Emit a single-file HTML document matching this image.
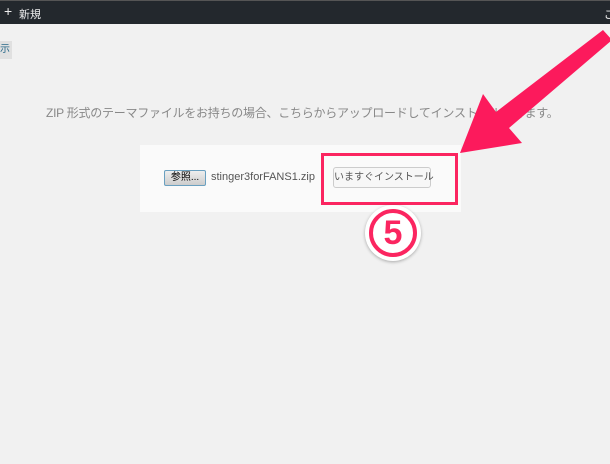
<!DOCTYPE html>
<html><head><meta charset="utf-8"><style>
body{margin:0;width:610px;height:464px;background:#f1f1f1;font-family:"Liberation Sans","Noto Sans CJK JP",sans-serif;position:relative;overflow:hidden}
.bar{position:absolute;left:0;top:0;width:610px;height:24px;background:#23282d;border-top:1px solid #555;box-sizing:border-box;color:#eee;font-size:11px}
.abs{position:absolute;white-space:nowrap}
</style></head><body>
<div class="bar"><span class="abs" style="left:4px;top:3px;font-size:14px;line-height:14px">+</span><span class="abs" style="left:19px;top:5px">新規</span><span class="abs" style="left:604px;top:5px">ご</span></div>
<div class="abs" style="left:0;top:41px;width:12px;height:18px;background:#e0e0e0;font-size:10px;color:#2a6a8a;line-height:18px;overflow:hidden">示</div>
<div class="abs" style="left:46px;top:104px;font-size:12px;letter-spacing:-0.25px;color:#888">ZIP 形式のテーマファイルをお持ちの場合、こちらからアップロードしてインストールできます。</div>
<div class="abs" style="left:140px;top:145px;width:321px;height:67px;background:#fafafa"></div>
<div class="abs" style="left:164px;top:170px;width:42px;height:16px;border:1px solid #6aa0c0;border-radius:2px;background:linear-gradient(#eee,#ccc);font-size:10px;line-height:14px;text-align:center;box-sizing:border-box">参照...</div>
<div class="abs" style="left:211px;top:171px;font-size:11px;color:#555">stinger3forFANS1.zip</div>
<div class="abs" style="left:333px;top:167px;width:98px;height:21px;border:1px solid #ccc;border-radius:3px;background:#f7f7f7;box-sizing:border-box;font-size:10px;color:#555;line-height:19px;text-align:center">いますぐインストール</div>
<div class="abs" style="left:321px;top:153px;width:137px;height:52px;border:3px solid #fb2560;box-sizing:border-box"></div>
<div class="abs" style="left:365px;top:205px;width:56px;height:56px;border-radius:50%;background:#fff;box-shadow:0 1px 3px rgba(0,0,0,.3)"></div>
<div class="abs" style="left:369px;top:209px;width:48px;height:48px;border-radius:50%;border:4px solid #fb2560;box-sizing:border-box;color:#fb2560;font-weight:bold;font-size:34px;line-height:40px;text-align:center">5</div>
<svg class="abs" style="left:0;top:0" width="610" height="464"><polygon points="603,30 612,40 509,128 522,143 460,153 483,94 496,112" fill="#fc1a5c"/></svg>
</body></html>
